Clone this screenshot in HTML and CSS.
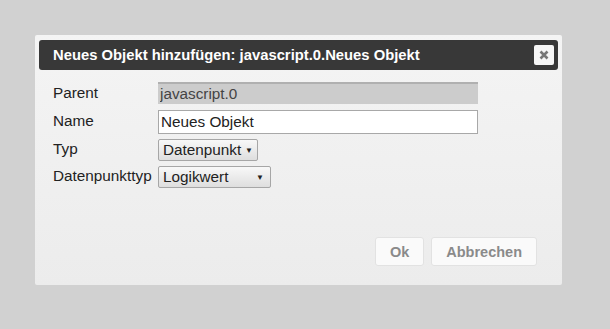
FILE: index.html
```html
<!DOCTYPE html>
<html lang="de">
<head>
    <meta charset="UTF-8">
    <title>Neues Objekt</title>
    <link rel="stylesheet" href="styles.css">
</head>
<body>

<div class="dialog">
    <div class="titlebar">
        <span class="title">Neues Objekt hinzufügen: javascript.0.Neues Objekt</span>
        <button class="close-button" title="close">
            <svg width="10" height="10" viewBox="0 0 10 10">
                <path d="M1.5 1.5 L8.5 8.5 M8.5 1.5 L1.5 8.5" stroke="#777" stroke-width="2.6" stroke-linecap="butt"/>
            </svg>
        </button>
    </div>

    <div class="form">
        <label class="label">Parent</label>
        <input type="text" class="field parent-field" value="javascript.0" readonly>

        <label class="label">Name</label>
        <input type="text" class="field name-field" value="Neues Objekt">

        <label class="label">Typ</label>
        <div class="select type-select">Datenpunkt <span class="arrow">▼</span></div>

        <label class="label">Datenpunkttyp</label>
        <div class="select kind-select">Logikwert <span class="arrow">▼</span></div>
    </div>

    <div class="buttons">
        <button class="btn ok-btn">Ok</button>
        <button class="btn">Abbrechen</button>
    </div>
</div>

</body>
</html>
```

FILE: styles.css
```css
body {
    margin: 0;
    background-color: #d1d1d1;
    font-family: Arial, "Liberation Sans", sans-serif;
}
.dialog {
    width: 527px;
    height: 250px;
    margin: 35px 0 0 35px;
    padding: 5px 4px;
    box-sizing: border-box;
    background: linear-gradient(to bottom, #f4f4f4, #ececec);
    border-radius: 2px;
    display: flex;
    flex-direction: column;
}
.titlebar {
    height: 30px;
    background-color: #383838;
    border-radius: 3px;
    display: flex;
    align-items: center;
    padding: 0 4px 0 14px;
}
.title {
    flex: 1;
    color: #fff;
    font-weight: bold;
    font-size: 14.8px;
}
.close-button {
    width: 20px;
    height: 20px;
    padding: 0;
    margin: 0;
    border: none;
    border-radius: 2px;
    background-color: #f6f6f6;
    display: flex;
    align-items: center;
    justify-content: center;
}
.form {
    display: grid;
    grid-template-columns: 105px 320px;
    grid-template-rows: 22px 24px 22px 22px;
    row-gap: 5px;
    align-items: center;
    margin: 12px 0 0 14px;
    font-size: 15.3px;
    color: #222;
}
.label {
    color: #222;
}
.field {
    font-family: Arial, "Liberation Sans", sans-serif;
    font-size: 15.3px;
    color: #222;
    box-sizing: border-box;
    margin: 0;
    padding: 1px 2px;
    outline: none;
}
.parent-field {
    height: 22px;
    background-color: #cccccc;
    border: none;
    border-top: 2px solid #b0b0b0;
    color: #444;
}
.name-field {
    height: 24px;
    margin-top: 2px;
    background-color: #fff;
    border: 1px solid #a8a8a8;
    width: 320px;
}
.select {
    box-sizing: border-box;
    height: 22px;
    margin-top: 2px;
    padding: 1px 4px;
    border: 1px solid #a6a6a6;
    border-radius: 2px;
    background: linear-gradient(to bottom, #f8f8f8, #dedede);
    font-size: 15.3px;
    color: #222;
    display: flex;
    align-items: center;
    justify-content: space-between;
}
.type-select {
    width: 100px;
}
.kind-select {
    width: 113px;
    padding-right: 6px;
}
.arrow {
    font-size: 8px;
    color: #222;
}
.buttons {
    margin-top: auto;
    margin-bottom: 14px;
    display: flex;
    justify-content: flex-end;
    gap: 7px;
    padding-right: 21px;
}
.btn {
    height: 29px;
    padding: 0 14px;
    background-color: #fafafa;
    border: 1px solid #e2e2e2;
    border-radius: 3px;
    color: #8a8a8a;
    font-family: Arial, "Liberation Sans", sans-serif;
    font-weight: bold;
    font-size: 14.5px;
    cursor: pointer;
}
.ok-btn {
    width: 49px;
    padding: 0;
}
```
